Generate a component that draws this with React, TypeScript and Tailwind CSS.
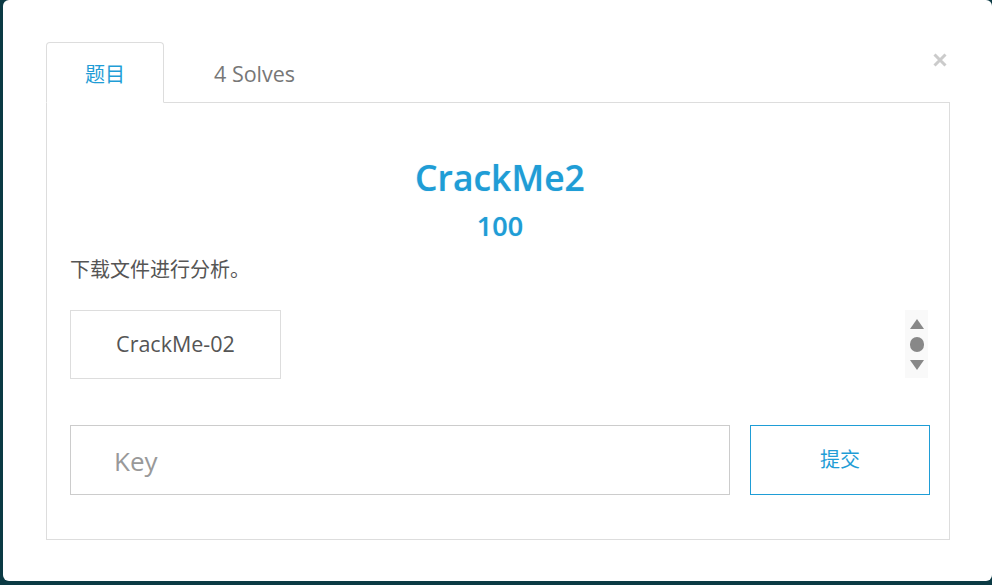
import React from 'react';

const font = { fontFamily: '"Open Sans", "Noto Sans CJK SC", sans-serif' };

export default function App() {
  return (
    <div className="w-[992px] h-[585px] bg-[#0b3a44] flex overflow-hidden" style={font}>
      <div className="ml-[3px] flex-1 h-[581px] bg-white rounded-md pl-[43px] pr-[42px] pt-[42px] flex flex-col">
        {/* Tabs */}
        <div className="flex items-stretch h-[60px] relative">
          <div className="w-[118px] h-[61px] pt-[4px] border border-[#ddd] border-b-white rounded-t-[4px] bg-white z-10 flex items-center justify-center text-[20px] text-[#1f9dd6]">
            题目
          </div>
          <div className="pl-[50px] pt-[5px] flex items-center text-[21.5px] text-[#777]">4 Solves</div>
          <button className="absolute right-[3px] top-[11px] w-[14px] h-[14px]">
            <svg viewBox="0 0 14 14" className="w-[14px] h-[14px]">
              <path d="M1.5 1.5 L12.5 12.5 M12.5 1.5 L1.5 12.5" stroke="#cbcbcb" strokeWidth="3" />
            </svg>
          </button>
        </div>

        {/* Panel */}
        <div className="border border-[#ddd] h-[438px] pl-[23px] pr-[19px] pt-[52px] flex flex-col">
          <h1
            className="text-center text-[35.5px] leading-[44px] text-[#1f9dd6] font-semibold"
            style={{ textShadow: '0 0 1px rgba(31,157,214,0.4)' }}
          >
            CrackMe2
          </h1>
          <div
            className="text-center text-[27px] leading-[34px] mt-[10px] text-[#1f9dd6] font-semibold"
            style={{ textShadow: '0 0 1px rgba(31,157,214,0.4)' }}
          >
            100
          </div>
          <p className="mt-[13px] text-[20px] leading-[28px] text-[#555]">下载文件进行分析。</p>

          <div className="mt-[26px] flex items-stretch justify-between">
            <button className="w-[211px] h-[69px] border border-[#ddd] text-[21.5px] text-[#555] flex items-center justify-center">
              CrackMe-02
            </button>
            <div className="w-[23px] h-[68px] bg-[#f9f9f9] mr-[2px] flex flex-col items-center justify-center gap-[8px]">
              <svg viewBox="0 0 14 10" className="w-[14px] h-[10px]">
                <path d="M7 0 L14 10 L0 10 Z" fill="#888" />
              </svg>
              <div className="w-[14px] h-[15px] rounded-full bg-[#888]" />
              <svg viewBox="0 0 14 10" className="w-[14px] h-[10px]">
                <path d="M0 0 L14 0 L7 10 Z" fill="#888" />
              </svg>
            </div>
          </div>

          <div className="mt-[46px] flex gap-[20px]">
            <div className="flex-1 h-[70px] border border-[#ccc] flex items-center pl-[43px] pt-[2px]">
              <input
                placeholder="Key"
                className="w-full outline-none text-[26px] text-[#555] placeholder:text-[#999] bg-transparent"
                style={font}
              />
            </div>
            <button className="w-[180px] h-[70px] border border-[#1f9dd6] text-[20px] text-[#1f9dd6] flex items-center justify-center">
              提交
            </button>
          </div>
        </div>
      </div>
    </div>
  );
}
